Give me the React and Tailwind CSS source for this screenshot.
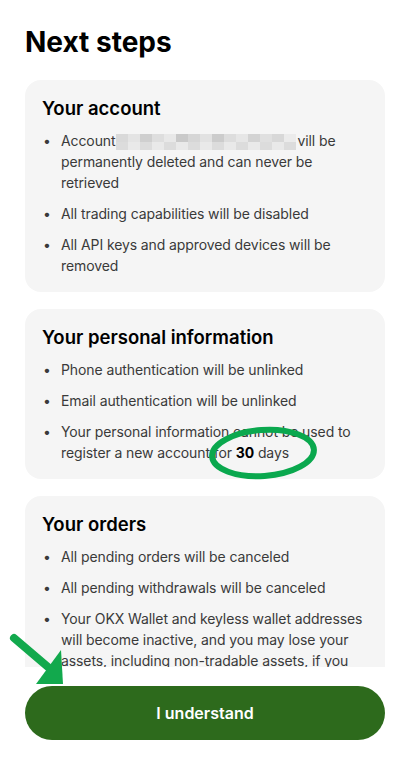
import React from 'react';

const sections = [
  {
    title: 'Your account',
    items: [
      <>
        Account
        <span className="inline-flex align-middle mx-[1px] h-[16px] w-[180px] overflow-hidden">
          {['#d9d9d9', '#e4e4e4', '#cfcfcf', '#dedede', '#e8e8e8', '#c9c9c9', '#d6d6d6', '#e2e2e2', '#cccccc', '#dddddd', '#e6e6e6', '#d3d3d3', '#e0e0e0', '#d8d8d8', '#ebebeb'].map((c, i) => (
            <span key={i} className="flex-1 flex flex-col">
              <span className="flex-1" style={{ background: c }} />
              <span className="flex-1" style={{ background: i % 2 ? '#e9e9e9' : '#dcdcdc' }} />
            </span>
          ))}
        </span>
        vill be permanently deleted and can never be retrieved
      </>,
      'All trading capabilities will be disabled',
      'All API keys and approved devices will be removed',
    ],
  },
  {
    title: 'Your personal information',
    items: [
      'Phone authentication will be unlinked',
      'Email authentication will be unlinked',
      <>
        Your personal information cannot be used to register a new account for{' '}
        <span className="font-bold text-black">30</span> days
      </>,
    ],
  },
  {
    title: 'Your orders',
    items: [
      'All pending orders will be canceled',
      'All pending withdrawals will be canceled',
      'Your OKX Wallet and keyless wallet addresses will become inactive, and you may lose your assets, including non-tradable assets, if you have not withdrawn them',
    ],
  },
];

function Card({ title, items }) {
  return (
    <div className="bg-[#f5f5f5] rounded-[16px] px-[17px] pt-[16px] pb-[16px]">
      <h2 className="text-[18.5px] leading-[24px] font-semibold text-black mb-[10px]">{title}</h2>
      <ul className="flex flex-col gap-[10px]">
        {items.map((it, i) => (
          <li key={i} className="flex text-[14px] leading-[21px] text-[#3a3a3a] tracking-[-0.1px]">
            <span className="w-[19px] shrink-0 pl-[1px]">•</span>
            <span>{it}</span>
          </li>
        ))}
      </ul>
    </div>
  );
}

export default function App() {
  return (
    <div
      className="relative h-[771px] w-[408px] bg-white flex flex-col overflow-hidden"
      style={{ fontFamily: 'Inter, "Noto Sans", sans-serif' }}
    >
      <h1 className="px-[25px] pt-[25px] text-[28px] leading-[34px] font-bold text-black">
        Next steps
      </h1>
      <div className="flex-1 overflow-hidden mt-[21px] pl-[25px] pr-[23px]">
        <div className="flex flex-col gap-[17px]">
          {sections.map((s) => (
            <Card key={s.title} {...s} />
          ))}
        </div>
      </div>
      <div className="pl-[25px] pr-[23px] pt-[19px] pb-[31px] bg-white">
        <button className="w-full h-[54px] rounded-full bg-[#2d6a1c] text-white text-[16px] font-semibold">
          I understand
        </button>
      </div>

      <svg className="absolute left-0 top-0 pointer-events-none" width="408" height="771">
        <ellipse
          cx="263"
          cy="453"
          rx="51"
          ry="23"
          transform="rotate(-4 263 453)"
          fill="none"
          stroke="#0aa84e"
          strokeWidth="6"
        />
        <line x1="14" y1="638" x2="48" y2="667" stroke="#12a94d" strokeWidth="8" strokeLinecap="round" />
        <polygon points="61,650 63,684 36,684" fill="#12a94d" />
      </svg>
    </div>
  );
}
